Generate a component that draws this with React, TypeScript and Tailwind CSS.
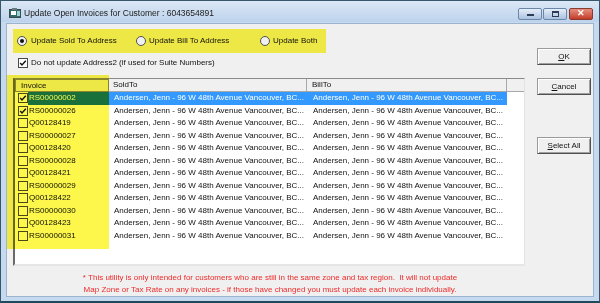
import React from "react"

type Row = { invoice: string; checked: boolean }

const rows: Row[] = [
  { invoice: "RS00000002", checked: true },
  { invoice: "RS00000026", checked: true },
  { invoice: "Q00128419", checked: false },
  { invoice: "RS00000027", checked: false },
  { invoice: "Q00128420", checked: false },
  { invoice: "RS00000028", checked: false },
  { invoice: "Q00128421", checked: false },
  { invoice: "RS00000029", checked: false },
  { invoice: "Q00128422", checked: false },
  { invoice: "RS00000030", checked: false },
  { invoice: "Q00128423", checked: false },
  { invoice: "RS00000031", checked: false },
]

const addr = "Andersen, Jenn - 96 W 48th Avenue Vancouver, BC..."

function Check({ checked }: { checked: boolean }) {
  return (
    <div className="w-[10px] h-[10px] shrink-0 border border-[#4a4a4a] bg-white flex items-center justify-center">
      {checked && (
        <svg width="8" height="8" viewBox="0 0 8 8">
          <path d="M1.2 4 L3 6 L6.8 1.8" stroke="#111" strokeWidth="1.4" fill="none" />
        </svg>
      )}
    </div>
  )
}

function Radio({ on }: { on: boolean }) {
  return (
    <div className="w-[10px] h-[10px] shrink-0 rounded-full border border-[#555] bg-white flex items-center justify-center">
      {on && <div className="w-[4px] h-[4px] rounded-full bg-[#111]" />}
    </div>
  )
}

function Btn({ label, hot }: { label: string; hot: string }) {
  const rest = label.slice(hot.length)
  return (
    <div className="w-[54px] h-[17px] flex items-center justify-center bg-[#f0f0f0] border border-[#9a9a9a] border-r-[#505050] border-b-[#505050] shadow-[inset_1px_1px_0_#ffffff,inset_-1px_-1px_0_#a0a0a0] text-[8px] text-[#111]">
      <span className="underline">{hot}</span>
      {rest}
    </div>
  )
}

export default function App() {
  return (
    <div className="w-[600px] h-[303px] flex flex-col bg-[#c6d9ef] border border-[#35566b] border-b-2 border-b-[#1f4a5a] font-['Liberation_Sans',Arial,sans-serif] overflow-hidden">
      {/* TITLE BAR */}
      <div className="h-[21px] shrink-0 flex items-center bg-gradient-to-b from-[#dbe7f5] to-[#bdd3ec] pl-[8px] pr-[6px] pt-[4px]">
        <svg width="13" height="11" viewBox="0 0 13 11" className="mr-[2px]">
          <rect x="0.5" y="1.5" width="11" height="8" fill="#2f6d6a" stroke="#3a4a50" />
          <rect x="2" y="3" width="5" height="4" fill="#ffffff" />
          <rect x="8" y="3" width="3" height="5" fill="#9ad0d0" />
          <rect x="3" y="0" width="5" height="2" fill="#6b7a80" />
        </svg>
        <span className="text-[8.5px] text-[#1b1b1b]">Update Open Invoices for Customer : 6043654891</span>
        <div className="ml-auto flex gap-[1px]">
          <div className="w-[24px] h-[12px] rounded-[2px] border border-[#6a86a8] bg-gradient-to-b from-[#e6eef8] to-[#aac2e0] flex items-center justify-center">
            <div className="w-[7px] h-[2px] bg-[#2b3d55] mt-[3px]" />
          </div>
          <div className="w-[24px] h-[12px] rounded-[2px] border border-[#6a86a8] bg-gradient-to-b from-[#e6eef8] to-[#aac2e0] flex items-center justify-center">
            <div className="w-[7px] h-[6px] border border-[#2b3d55] border-t-2" />
          </div>
          <div className="w-[24px] h-[12px] ml-[1px] rounded-[2px] border border-[#8a3a2e] bg-gradient-to-b from-[#e48e7e] to-[#c23b28] flex items-center justify-center">
            <span className="text-white text-[9px] font-bold leading-none">✕</span>
          </div>
        </div>
      </div>

      {/* CLIENT */}
      <div className="flex-1 mx-[5px] mb-[5px] mt-[1px] border border-[#9db4cf] bg-[#f0f0f0] flex text-[8px] text-[#111]">
        <div className="w-[526px] shrink-0 flex flex-col relative">
          {/* highlighted invoice column */}
          <div className="absolute left-[0px] top-[51px] w-[102px] h-[174px] bg-[#fcf74a] mix-blend-multiply pointer-events-none z-10" />

          <div className="ml-[6px] mt-[5px] w-[313px] h-[24px] bg-[#fcf74a] mix-blend-multiply flex items-center pl-[4px]">
            <div className="w-[119px] flex items-center gap-[4px]">
              <Radio on />
              <span>Update Sold To Address</span>
            </div>
            <div className="w-[124px] flex items-center gap-[3px]">
              <Radio on={false} />
              <span>Update Bill To Address</span>
            </div>
            <div className="flex items-center gap-[3px]">
              <Radio on={false} />
              <span>Update Both</span>
            </div>
          </div>

          <div className="ml-[11px] mt-[4px] h-[12px] flex items-center gap-[3px]">
            <Check checked />
            <span>Do not update Address2 (if used for Suite Numbers)</span>
          </div>

          {/* GRID */}
          <div className="ml-[6px] mt-[9px] w-[512px] h-[188px] bg-white border-t border-l-2 border-t-[#8a8a8a] border-l-[#6a6a6a] border-r border-b-2 border-r-[#e3e3e3] border-b-[#e6e6e6] overflow-hidden">
            <div className="flex h-[13px] bg-[#f0f0f0]">
              <div className="w-[94px] border border-[#8a8a8a] pl-[5px] flex items-center">Invoice</div>
              <div className="w-[198px] border-r border-b border-[#a8a8a8] pl-[4px] flex items-center">SoldTo</div>
              <div className="w-[200px] border-r border-b border-[#a8a8a8] pl-[5px] flex items-center">BillTo</div>
              <div className="flex-1 border-b border-[#a8a8a8]" />
            </div>
            {rows.map((r, i) => {
              const sel = i === 0
              return (
                <div key={r.invoice} className="flex h-[12.5px] items-center">
                  <div className="w-[94px] h-full flex items-center pl-[3px]">
                    <Check checked={r.checked} />
                    <div className={`flex-1 h-full flex items-center pl-[1px] ${sel ? "bg-[#1a74c8] text-white" : ""}`}>
                      {r.invoice}
                    </div>
                  </div>
                  <div className={`w-[398px] h-full flex items-center ${sel ? "bg-[#3399ff] text-white" : ""}`}>
                    <div className="w-[198px] pl-[5px] whitespace-nowrap">{addr}</div>
                    <div className="w-[200px] pl-[6px] whitespace-nowrap">{addr}</div>
                  </div>
                </div>
              )
            })}
          </div>

          <div className="mt-[6px] text-center text-[#ee2a2a] leading-[12px]">
            <div>* This utility is only intended for customers who are still in the same zone and tax region.&nbsp; It will not update</div>
            <div>Map Zone or Tax Rate on any invoices - if those have changed you must update each invoice individually.</div>
          </div>
        </div>

        {/* BUTTONS */}
        <div className="flex flex-col pl-[4px] pt-[24px]">
          <Btn label="OK" hot="O" />
          <div className="mt-[13px]">
            <Btn label="Cancel" hot="C" />
          </div>
          <div className="mt-[42px]">
            <Btn label="Select All" hot="S" />
          </div>
        </div>
      </div>
    </div>
  )
}
